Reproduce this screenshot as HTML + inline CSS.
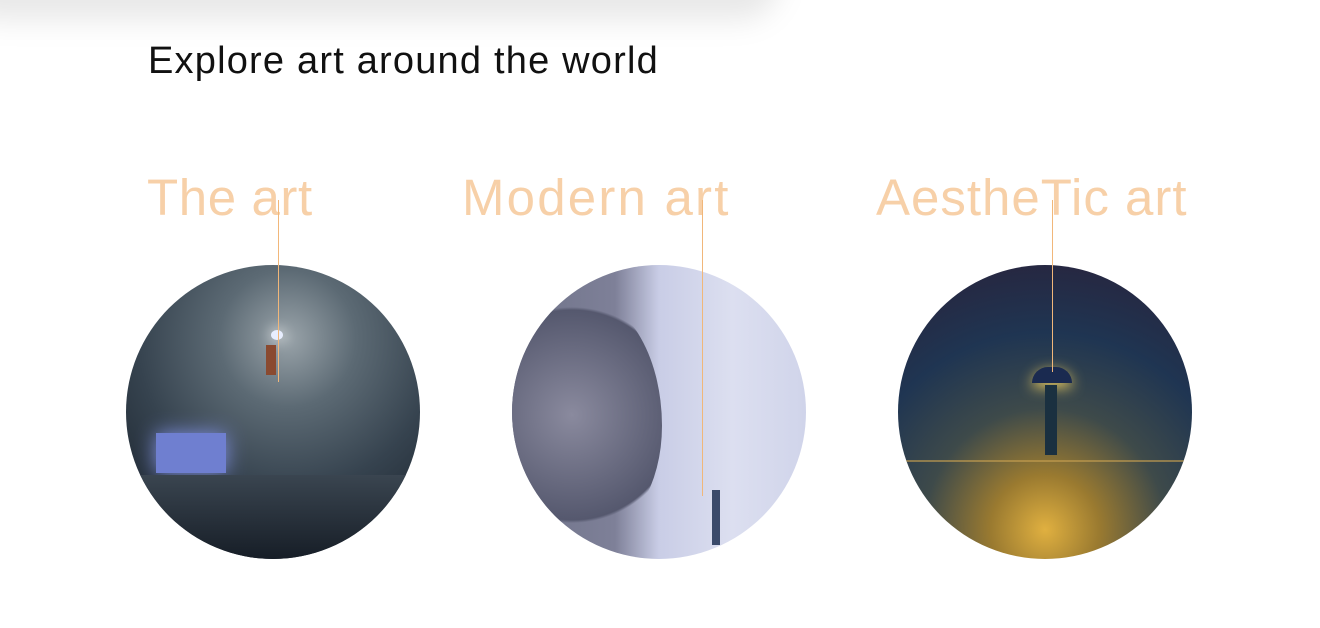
<!DOCTYPE html>
<html><head><style>
body{margin:0;width:1320px;height:628px;background:#fff;position:relative;overflow:hidden;font-family:"Liberation Sans",sans-serif}
.hdr{position:absolute;left:-40px;top:-40px;width:820px;height:60px;background:rgba(0,0,0,.09);filter:blur(14px);border-radius:0 0 40px 40px}
h1{position:absolute;left:148px;top:40px;margin:0;font-weight:300;font-size:38px;color:#111;letter-spacing:1.2px}
.t{position:absolute;top:168px;font-size:51px;font-weight:100;color:#f7d0a8}
.c{position:absolute;top:265px;width:294px;height:294px;border-radius:50%;overflow:hidden}
.ln{position:absolute;width:1px;background:#f1b77a}
</style></head><body>
<div class="hdr"></div>
<h1>Explore art around the world</h1>
<div class="t" style="left:147px;letter-spacing:0.6px">The art</div>
<div class="t" style="left:462px;letter-spacing:2.2px">Modern art</div>
<div class="t" style="left:876px;letter-spacing:1px">AestheTic art</div>
<div class="c" style="left:126px;background:radial-gradient(circle at 55% 25%,#9aa4aa 0,#5c6a74 25%,#36434f 55%,#1d2630 85%)">
 <div style="position:absolute;left:30px;top:168px;width:70px;height:40px;background:#6f7fd0;box-shadow:0 0 20px #8090e0"></div>
 <div style="position:absolute;left:0;top:210px;width:294px;height:90px;background:linear-gradient(#3a4550,#141b24)"></div>
 <div style="position:absolute;left:145px;top:65px;width:12px;height:10px;border-radius:50%;background:#e8eeff;box-shadow:0 0 14px #fff"></div>
 <div style="position:absolute;left:140px;top:80px;width:10px;height:30px;background:#8a4a30"></div>
</div>
<div class="c" style="left:512px;background:linear-gradient(90deg,#6e7288 0,#7e8098 35%,#c9cde6 50%,#dcdff0 75%,#d0d4ea 100%)">
 <div style="position:absolute;left:0;top:30px;width:150px;height:240px;border-radius:40% 60% 50% 40%;background:radial-gradient(circle at 40% 50%,#8a8a9e,#55586e 70%,transparent 72%)"></div>
 <div style="position:absolute;left:200px;top:225px;width:8px;height:55px;background:#3a4a6a"></div>
</div>
<div class="c" style="left:898px;background:radial-gradient(circle at 50% 90%,#e0b040 0,#9a7a30 18%,#3e4a4a 40%,#1f3552 65%,#2a2038 100%)">
 <div style="position:absolute;left:0;top:195px;width:294px;height:2px;background:#c8a050;opacity:.6"></div>
 <div style="position:absolute;left:134px;top:102px;width:40px;height:16px;border-radius:20px 20px 0 0;background:#1a2a50;box-shadow:0 4px 14px #f0d060"></div>
 <div style="position:absolute;left:147px;top:120px;width:12px;height:70px;background:#1a3040"></div>
</div>
<div class="ln" style="left:278px;top:200px;height:182px"></div>
<div class="ln" style="left:702px;top:200px;height:296px"></div>
<div class="ln" style="left:1052px;top:200px;height:172px"></div>
</body></html>
